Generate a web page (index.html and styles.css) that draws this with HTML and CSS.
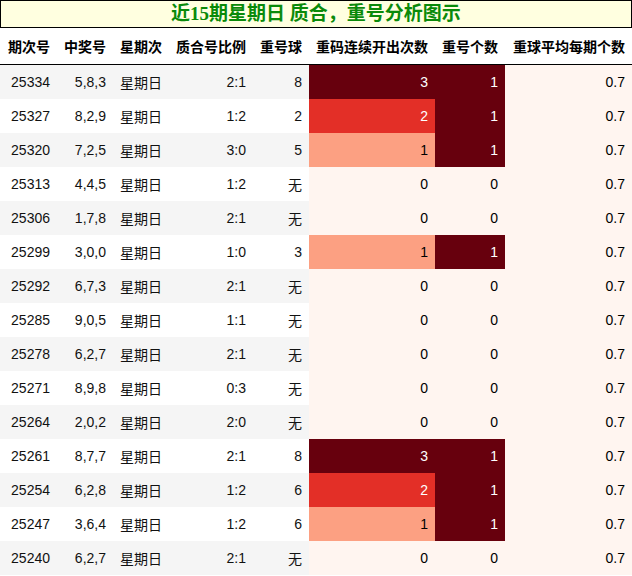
FILE: index.html
```html
<!DOCTYPE html>
<html lang="zh">
<head>
<meta charset="utf-8">
<title>近15期星期日 质合，重号分析图示</title>
<link rel="stylesheet" href="styles.css">
</head>
<body>
<div class="title">近15期星期日 质合，重号分析图示</div>
<table class="grid">
<colgroup>
<col class="c1"><col class="c2"><col class="c3"><col class="c4"><col class="c5"><col class="c6"><col class="c7"><col class="c8">
</colgroup>
<thead>
<tr><th>期次号</th><th>中奖号</th><th>星期次</th><th>质合号比例</th><th>重号球</th><th>重码连续开出次数</th><th>重号个数</th><th>重球平均每期个数</th></tr>
</thead>
<tbody>
<tr><td>25334</td><td>5,8,3</td><td class="l">星期日</td><td>2:1</td><td>8</td><td class="h3">3</td><td class="h3">1</td><td class="h0">0.7</td></tr>
<tr><td>25327</td><td>8,2,9</td><td class="l">星期日</td><td>1:2</td><td>2</td><td class="h2">2</td><td class="h3">1</td><td class="h0">0.7</td></tr>
<tr><td>25320</td><td>7,2,5</td><td class="l">星期日</td><td>3:0</td><td>5</td><td class="h1">1</td><td class="h3">1</td><td class="h0">0.7</td></tr>
<tr><td>25313</td><td>4,4,5</td><td class="l">星期日</td><td>1:2</td><td>无</td><td class="h0">0</td><td class="h0">0</td><td class="h0">0.7</td></tr>
<tr><td>25306</td><td>1,7,8</td><td class="l">星期日</td><td>2:1</td><td>无</td><td class="h0">0</td><td class="h0">0</td><td class="h0">0.7</td></tr>
<tr><td>25299</td><td>3,0,0</td><td class="l">星期日</td><td>1:0</td><td>3</td><td class="h1">1</td><td class="h3">1</td><td class="h0">0.7</td></tr>
<tr><td>25292</td><td>6,7,3</td><td class="l">星期日</td><td>2:1</td><td>无</td><td class="h0">0</td><td class="h0">0</td><td class="h0">0.7</td></tr>
<tr><td>25285</td><td>9,0,5</td><td class="l">星期日</td><td>1:1</td><td>无</td><td class="h0">0</td><td class="h0">0</td><td class="h0">0.7</td></tr>
<tr><td>25278</td><td>6,2,7</td><td class="l">星期日</td><td>2:1</td><td>无</td><td class="h0">0</td><td class="h0">0</td><td class="h0">0.7</td></tr>
<tr><td>25271</td><td>8,9,8</td><td class="l">星期日</td><td>0:3</td><td>无</td><td class="h0">0</td><td class="h0">0</td><td class="h0">0.7</td></tr>
<tr><td>25264</td><td>2,0,2</td><td class="l">星期日</td><td>2:0</td><td>无</td><td class="h0">0</td><td class="h0">0</td><td class="h0">0.7</td></tr>
<tr><td>25261</td><td>8,7,7</td><td class="l">星期日</td><td>2:1</td><td>8</td><td class="h3">3</td><td class="h3">1</td><td class="h0">0.7</td></tr>
<tr><td>25254</td><td>6,2,8</td><td class="l">星期日</td><td>1:2</td><td>6</td><td class="h2">2</td><td class="h3">1</td><td class="h0">0.7</td></tr>
<tr><td>25247</td><td>3,6,4</td><td class="l">星期日</td><td>1:2</td><td>6</td><td class="h1">1</td><td class="h3">1</td><td class="h0">0.7</td></tr>
<tr><td>25240</td><td>6,2,7</td><td class="l">星期日</td><td>2:1</td><td>无</td><td class="h0">0</td><td class="h0">0</td><td class="h0">0.7</td></tr>
</tbody>
</table>
</body>
</html>
```

FILE: styles.css
```css
html, body {
  margin: 0;
  padding: 0;
  background: #ffffff;
}
body {
  width: 632px;
  font-family: "Liberation Sans", "Noto Sans CJK SC", sans-serif;
  color: #111;
}
.title {
  box-sizing: border-box;
  height: 28px;
  border: 1px solid #000;
  background: #ffffe0;
  color: #0a8a0a;
  font-family: "Liberation Serif", "Noto Sans CJK SC", serif;
  font-weight: bold;
  font-size: 19px;
  line-height: 25px;
  text-align: center;
}
.grid {
  width: 632px;
  border-collapse: collapse;
  table-layout: fixed;
  font-size: 14px;
}
.c1 { width: 57px; }
.c2 { width: 56px; }
.c3 { width: 56px; }
.c4 { width: 84px; }
.c5 { width: 56px; }
.c6 { width: 126px; }
.c7 { width: 70px; }
.c8 { width: 127px; }
.grid th {
  height: 36px;
  padding: 0 7px;
  font-weight: bold;
  font-size: 14px;
  text-align: right;
  white-space: nowrap;
  border-bottom: 1px solid #000;
  color: #000;
  font-family: "Noto Sans CJK SC", sans-serif;
}
.grid td {
  height: 34px;
  padding: 0 7px;
  text-align: right;
  vertical-align: middle;
  white-space: nowrap;
}
.grid td.l { text-align: left; }
.grid tbody tr:nth-child(odd) { background: #f5f5f5; }
.grid tbody tr:nth-child(even) { background: #ffffff; }
.grid td.h3 { background: #67000d; color: #ffffff; }
.grid td.h2 { background: #e32f27; color: #ffffff; }
.grid td.h1 { background: #fca082; color: #000000; }
.grid td.h0 { background: #fff5f0; color: #000000; }
```
